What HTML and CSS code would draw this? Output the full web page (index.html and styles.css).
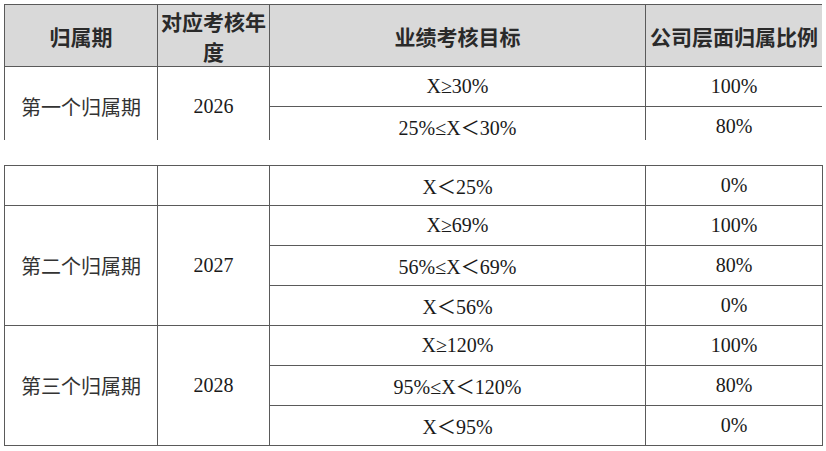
FILE: index.html
```html
<!DOCTYPE html>
<html lang="zh-CN">
<head>
<meta charset="utf-8">
<title>归属期业绩考核目标</title>
<link rel="stylesheet" href="styles.css">
</head>
<body>
<div class="page">
  <div class="part part-top">
    <table class="grid">
      <colgroup>
        <col class="c1"><col class="c2"><col class="c3"><col class="c4">
      </colgroup>
      <thead>
        <tr class="head">
          <th>归属期</th>
          <th>对应考核年度</th>
          <th>业绩考核目标</th>
          <th>公司层面归属比例</th>
        </tr>
      </thead>
      <tbody>
        <tr>
          <td rowspan="2" class="cn">第一个归属期</td>
          <td rowspan="2" class="num">2026</td>
          <td class="num">X≥30%</td>
          <td class="num">100%</td>
        </tr>
        <tr>
          <td class="num">25%≤X<span class="fw">＜</span>30%</td>
          <td class="num">80%</td>
        </tr>
      </tbody>
    </table>
  </div>
  <div class="part part-bottom">
    <table class="grid">
      <colgroup>
        <col class="c1"><col class="c2"><col class="c3"><col class="c4">
      </colgroup>
      <tbody>
        <tr>
          <td class="cn"></td>
          <td class="num"></td>
          <td class="num">X<span class="fw">＜</span>25%</td>
          <td class="num">0%</td>
        </tr>
        <tr>
          <td rowspan="3" class="cn">第二个归属期</td>
          <td rowspan="3" class="num">2027</td>
          <td class="num">X≥69%</td>
          <td class="num">100%</td>
        </tr>
        <tr>
          <td class="num">56%≤X<span class="fw">＜</span>69%</td>
          <td class="num">80%</td>
        </tr>
        <tr>
          <td class="num">X<span class="fw">＜</span>56%</td>
          <td class="num">0%</td>
        </tr>
        <tr>
          <td rowspan="3" class="cn">第三个归属期</td>
          <td rowspan="3" class="num">2028</td>
          <td class="num">X≥120%</td>
          <td class="num">100%</td>
        </tr>
        <tr>
          <td class="num">95%≤X<span class="fw">＜</span>120%</td>
          <td class="num">80%</td>
        </tr>
        <tr>
          <td class="num">X<span class="fw">＜</span>95%</td>
          <td class="num">0%</td>
        </tr>
      </tbody>
    </table>
  </div>
</div>
</body>
</html>
```

FILE: styles.css
```css
html, body {
  margin: 0;
  padding: 0;
  background: #ffffff;
}

.page {
  padding: 4px 0 0 4px;
  width: 818px;
}

.part-top {
  height: 136px;
  overflow: hidden;
}

.part-bottom {
  margin-top: 25px;
}

.grid {
  border-collapse: collapse;
  table-layout: fixed;
  width: 818px;
}

.c1 { width: 153px; }
.c2 { width: 112px; }
.c3 { width: 376px; }
.c4 { width: 177px; }

.grid th,
.grid td {
  border: 1px solid #5a5a5a;
  text-align: center;
  vertical-align: middle;
  padding: 0 4px;
}

.grid th {
  padding: 0 2px;
}

.head th {
  height: 61px;
  background: #d9d9d9;
  font-family: "Noto Sans CJK SC", "Noto Sans", sans-serif;
  font-size: 21px;
  font-weight: 700;
  line-height: 30px;
  color: #2a2a2a;
}

.grid td {
  height: 39px;
}

.cn {
  font-family: "Noto Sans CJK SC", "Noto Sans", sans-serif;
  font-size: 20px;
  font-weight: 400;
  color: #333333;
}

.num {
  font-family: "Liberation Serif", "Noto Sans CJK SC", serif;
  font-size: 20px;
  color: #1a1a1a;
}

.fw {
  font-family: "Noto Sans CJK SC", sans-serif;
  font-size: 19px;
}
```
